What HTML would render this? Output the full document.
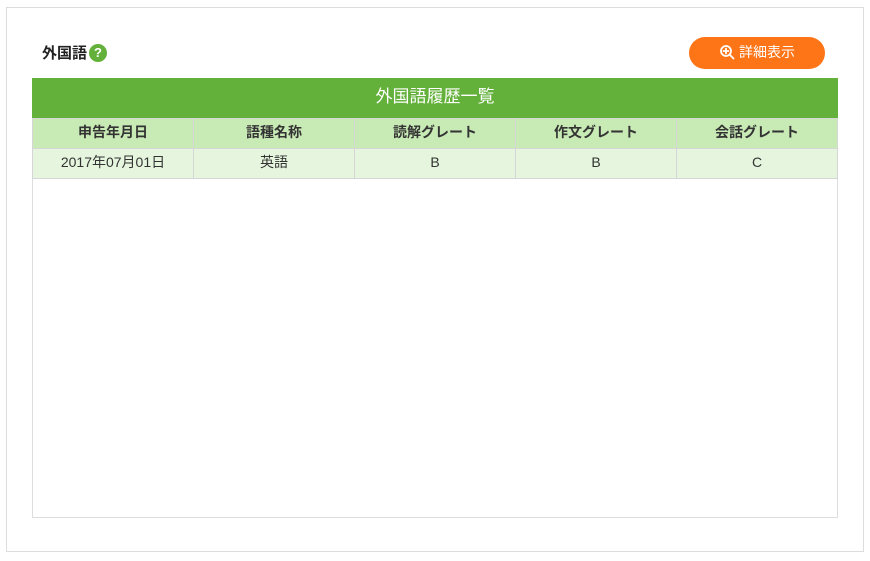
<!DOCTYPE html>
<html><head><meta charset="utf-8"><style>
*{box-sizing:border-box;margin:0;padding:0}
body{width:870px;height:561px;background:#fff;font-family:"Liberation Sans","Noto Sans CJK JP",sans-serif;color:#333;position:relative;overflow:hidden}
.outer{position:absolute;left:6px;top:7px;width:858px;height:545px;border:1px solid #ddd}
.title{position:absolute;left:42px;top:42px;font-size:15px;font-weight:bold;color:#222;display:flex;align-items:center}
.q{display:inline-block;width:18px;height:18px;border-radius:50%;background:#63b13a;color:#fff;font-size:13px;text-align:center;line-height:18px;margin-left:2px}
.btn{position:absolute;left:689px;top:37px;width:136px;height:32px;border-radius:16px;background:#fe7518;color:#fff;font-size:14px;display:flex;align-items:center;justify-content:center;gap:4px;padding-bottom:2px}
.box{position:absolute;left:32px;top:78px;width:806px;height:440px;border:1px solid #ddd;border-top:none}
.head{position:absolute;left:32px;top:78px;width:806px;height:40px;background:#63b13a;color:#fff;font-size:17px;text-align:center;line-height:38px}
table{position:absolute;left:32px;top:118px;width:806px;border-collapse:collapse;font-size:14px}
td,th{border:1px solid #d6d6d6;text-align:center;width:20%;padding-bottom:3px}
th{background:#c8eab5;height:30px;font-weight:bold;color:#333}
td{background:#e6f6de;height:30px;color:#333}
</style></head><body>
<div class="outer"></div>
<div class="title">外国語<span class="q">?</span></div>
<div class="btn"><svg width="16" height="16" viewBox="0 0 16 16"><circle cx="7" cy="7" r="5" fill="none" stroke="#fff" stroke-width="1.8"/><path d="M11 11l3.5 3.5M7 4.5v5M4.5 7h5" stroke="#fff" stroke-width="1.8" stroke-linecap="round"/></svg>詳細表示</div>
<div class="box"></div>
<div class="head">外国語履歴一覧</div>
<table><tr><th>申告年月日</th><th>語種名称</th><th>読解グレート</th><th>作文グレート</th><th>会話グレート</th></tr>
<tr><td>2017年07月01日</td><td>英語</td><td>B</td><td>B</td><td>C</td></tr></table>
</body></html>
